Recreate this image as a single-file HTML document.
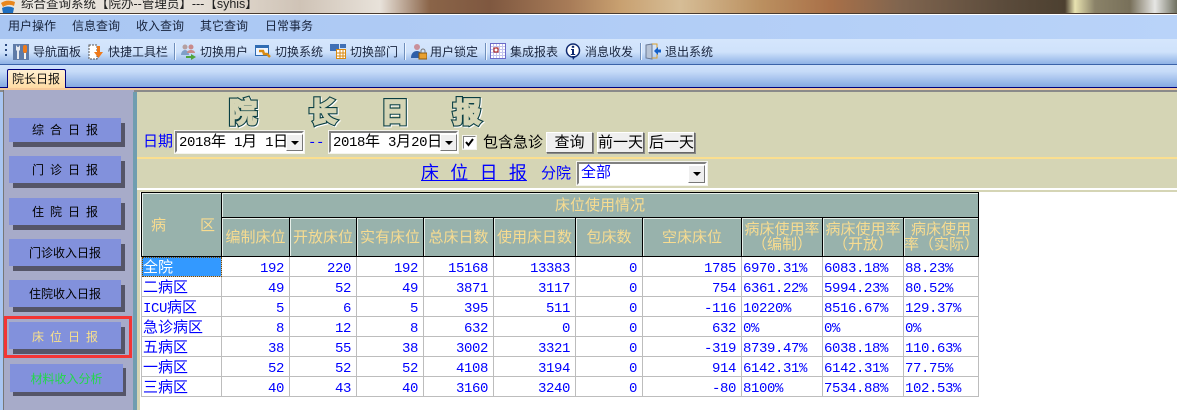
<!DOCTYPE html>
<html lang="zh"><head><meta charset="utf-8"><title>院长日报</title>
<style>
*{box-sizing:border-box;margin:0;padding:0}
html,body{width:1177px;height:410px;overflow:hidden;background:#fff}
body{position:relative;font-family:"Liberation Sans","WenQuanYi Zen Hei","Noto Sans CJK SC",sans-serif;font-size:15px;color:#000}
.a{position:absolute;white-space:pre}
.sm{font-family:"Liberation Sans","Noto Sans CJK SC",sans-serif;font-size:12px;line-height:16px;color:#17233c}
i{font-style:normal;font-family:"Liberation Mono",monospace;font-size:14px;letter-spacing:-.4px;line-height:14px}
.sep{position:absolute;top:43px;width:1px;height:17px;background:#6f8fbc;box-shadow:1px 0 0 #eef5ff}
svg{position:absolute}
.btn{position:absolute;background:#8291dc;box-shadow:4px 5px 0 #555568;text-align:center;line-height:28px;font-size:12px;word-spacing:2.700px;color:#000}
.inset{position:absolute;background:#fff;border:2px solid;border-color:#808080 #fff #fff #808080;outline:1px solid #f4f4ee}
.dd{position:absolute;background:#efefef;border:1px solid;border-color:#fff #777 #777 #fff}
.dd:after{content:"";position:absolute;left:4px;top:6px;border:4px solid transparent;border-top:4px solid #000;border-bottom:0}
.pb{position:absolute;top:132px;height:21px;background:#efefef;border:1px solid;border-color:#fff #666 #666 #fff;box-shadow:1px 1px 0 #888;text-align:center;line-height:19px}
table{position:absolute;left:141px;top:192px;width:837px;border-collapse:collapse;table-layout:fixed}
th{background:#98b2ac;color:#f8dc90;font-weight:400;border:1px solid #000;box-shadow:inset 1px 1px 0 #e6efe9;line-height:15px;padding:0;overflow:hidden}
td{border:1px solid #bdbdbd;height:20px;color:#00f;padding:2px 5px 0 1px;text-align:right;line-height:16px;overflow:hidden;white-space:nowrap;background:#fff}
td.l{text-align:left}
td.s{background:#3399ff;color:#fff;outline:1px dotted #7a4a00;outline-offset:-1px}
.h{font-family:"Noto Sans CJK SC",sans-serif;font-weight:700;font-size:28px;line-height:36px;top:93px}
.h1{color:#fff;-webkit-text-stroke:4px #fff;margin:1px 0 0 1px}
.h2{color:#0a3f44;-webkit-text-stroke:4px #0a3f44}
.h3{color:#d5d5b5;-webkit-text-stroke:1.800px #d5d5b5}
</style></head><body>

<!-- title bar -->
<div class="a" style="left:0;top:0;width:1177px;height:14px;background:linear-gradient(90deg,#e9e6e0 0,#e6dfd6 200px,#cfc3b6 300px,#e8e2da 380px,#8a6448 430px,#7f5840 490px,#a87c58 570px,#c8a070 620px,#d6bd96 680px,#bb9060 760px,#a97048 830px,#80654f 900px,#5c4c3c 1000px,#4c4030 1065px,#e8e2b0 1075px,#8a8268 1095px,#78705a 1130px,#e6e6e4 1155px,#6f7060 1177px);border-bottom:1px solid #4a3c30"></div>
<svg style="left:0;top:0" width="16" height="13"><path d="M1 3C5 0 10 0 15 2L14 6C10 4 6 5 3 7Z" fill="#e8871e"/><path d="M2 8C6 6 10 6 14 8L13 13H3Z" fill="#1f6fc0"/></svg>
<div class="a" style="left:21px;top:-4px;font:12.5px/16px 'Liberation Sans','Noto Sans CJK SC',sans-serif;color:#222">综合查询系统【院办--管理员】---【syhis】</div>

<!-- menu -->
<div class="a" style="left:0;top:15px;width:1177px;height:24px;background:linear-gradient(90deg,#a9c6f2,#b9d3f9)"></div>
<div class="a sm" style="left:8px;top:18px">用户操作</div>
<div class="a sm" style="left:72px;top:18px">信息查询</div>
<div class="a sm" style="left:136px;top:18px">收入查询</div>
<div class="a sm" style="left:200px;top:18px">其它查询</div>
<div class="a sm" style="left:265px;top:18px">日常事务</div>

<!-- toolbar -->
<div class="a" style="left:0;top:39px;width:1177px;height:26px;background:linear-gradient(#d5e6fc 0,#cfe2fb 50%,#8fb2e6 96%,#3a62a8 96%)"></div>
<div class="a" style="left:0;top:65px;width:1177px;height:23px;background:linear-gradient(#cfe2fb,#c6dbf8 30%,#86a9e2);border-bottom:1px solid #00007f"></div>
<div class="a" style="left:5px;top:44px;width:2px;height:15px;background:repeating-linear-gradient(#2a4a80 0 2px,transparent 2px 5px)"></div>

<svg style="left:13px;top:44px" width="17" height="16"><rect x="0" y="0" width="16" height="16" fill="#5f7ba8"/><path d="M3 1v5l1 1v8h2V7l1-1V1L5.500 3 4.500 3Z" fill="#e6e9f0"/><rect x="10" y="1" width="4" height="8" rx="2" fill="#ef7a1a"/><rect x="11" y="9" width="2" height="6" fill="#f2f2f2"/></svg>
<div class="a sm" style="left:33px;top:44px">导航面板</div>
<svg style="left:88px;top:44px" width="17" height="16"><rect x="1" y="1" width="8" height="14" fill="#fff" stroke="#555" stroke-dasharray="2 1"/><path d="M9 2h3v6h3l-4.500 6L6 8h3Z" fill="#ef7a1a"/></svg>
<div class="a sm" style="left:108px;top:44px">快捷工具栏</div>
<div class="sep" style="left:174px"></div>
<svg style="left:180px;top:43px" width="17" height="17"><circle cx="5" cy="4" r="2.500" fill="#b5a0a0"/><circle cx="11" cy="4" r="2.500" fill="#c98a8a"/><path d="M1 12c0-3 2-5 4-5s4 2 4 5Z" fill="#7f9fc8"/><path d="M7 10c0-2 2-3 4-3s4 1 4 3Z" fill="#c98a8a"/><path d="M6 13h5v-2l5 3-5 3v-2H6Z" fill="#4fa53a"/></svg>
<div class="a sm" style="left:200px;top:44px">切换用户</div>
<svg style="left:255px;top:44px" width="17" height="16"><rect x="0.500" y="1.500" width="13" height="10" fill="#eef5ff" stroke="#2f6cb3"/><rect x="1" y="2" width="12" height="2" fill="#2f6cb3"/><path d="M4 7l4 0 1 3 3 0 3 3" fill="none" stroke="#d98a10" stroke-width="2.500"/></svg>
<div class="a sm" style="left:275px;top:44px">切换系统</div>
<svg style="left:330px;top:43px" width="17" height="16"><rect x="0" y="1" width="9" height="7" fill="#3f6fb5"/><rect x="10" y="1" width="6" height="4" fill="#3f6fb5"/><rect x="6.500" y="6.500" width="9" height="9" fill="#fff" stroke="#d98a10"/><path d="M7 10h8M7 13h8M10 7v8M13 7v8" stroke="#d98a10"/></svg>
<div class="a sm" style="left:350px;top:44px">切换部门</div>
<div class="sep" style="left:404px"></div>
<svg style="left:411px;top:43px" width="16" height="17"><circle cx="6" cy="4" r="3" fill="#c9909a"/><path d="M0 15c0-5 3-7 6-7s5 2 5 7Z" fill="#2f5fa8"/><rect x="8" y="10" width="8" height="6" fill="#e8a030" stroke="#8a5a10"/><path d="M10 10V8a2 2 0 014 0v2" fill="none" stroke="#777"/></svg>
<div class="a sm" style="left:430px;top:44px">用户锁定</div>
<div class="sep" style="left:485px"></div>
<svg style="left:490px;top:43px" width="17" height="16"><rect x="0.500" y="0.500" width="15" height="15" fill="#fff" stroke="#6a6ac8"/><path d="M1 3.500h14M1 6.500h14M1 9.500h14M1 12.500h14M3.500 1v14M6.500 1v14M9.500 1v14M12.500 1v14" stroke="#c4c4ee"/><rect x="4" y="5" width="4" height="4" fill="#fff" stroke="#a00000"/></svg>
<div class="a sm" style="left:510px;top:44px">集成报表</div>
<svg style="left:565px;top:43px" width="16" height="18"><circle cx="8" cy="7.500" r="6.500" fill="#fff" stroke="#102a70" stroke-width="1.500"/><path d="M7 13l1 4 3-4Z" fill="#102a70"/><rect x="6.800" y="2.800" width="2.400" height="2" fill="#102a70"/><path d="M6 6h3v5h1.200v1H5.800v-1H7V7H6Z" fill="#102a70"/></svg>
<div class="a sm" style="left:585px;top:44px">消息收发</div>
<div class="sep" style="left:640px"></div>
<svg style="left:645px;top:43px" width="17" height="17"><path d="M1 2l6-1v15l-6-1Z" fill="#b8c4d6" stroke="#6a7a95"/><path d="M7 1h5v4M7 15h5v-4" fill="none" stroke="#d8a030"/><path d="M9 8l4-4v2.500h3v3h-3V12Z" fill="#1460c8"/></svg>
<div class="a sm" style="left:665px;top:44px">退出系统</div>

<!-- tab -->
<div class="a" style="left:7px;top:69px;width:59px;height:19px;background:linear-gradient(#fff0d2,#ffdca4);border:1px solid #00007f;border-bottom:0;border-radius:2px 2px 0 0;font:12px/18px 'Liberation Sans','Noto Sans CJK SC',sans-serif;padding-left:4px;color:#111">院长日报</div>
<div class="a" style="left:0;top:88px;width:1177px;height:2px;background:#f6c99a"></div>
<div class="a" style="left:0;top:90px;width:1177px;height:2px;background:#8a8a8a"></div>

<!-- side -->
<div class="a" style="left:0;top:92px;width:3px;height:318px;background:#a9c6f2"></div>
<div class="a" style="left:3px;top:90px;width:131px;height:320px;background:#a7abc9;border-left:1px solid #777"></div>
<div class="a" style="left:133px;top:92px;width:4px;height:318px;background:#6f9db0"></div>

<div class="btn" style="left:9px;top:118px;width:112px;height:24px;line-height:24px">综 合 日 报</div>
<div class="btn" style="left:9px;top:156px;width:112px;height:27px">门 诊 日 报</div>
<div class="btn" style="left:9px;top:198px;width:112px;height:27px">住 院 日 报</div>
<div class="btn" style="left:9px;top:239px;width:112px;height:27px">门诊收入日报</div>
<div class="btn" style="left:9px;top:280px;width:112px;height:27px">住院收入日报</div>
<div class="btn" style="left:9px;top:322px;width:112px;height:27px;line-height:30px;color:#f8e08c">床 位 日 报</div>
<div class="btn" style="left:10px;top:364px;width:113px;height:28px;line-height:30px;color:#22d84a;box-shadow:3px 4px 0 #555568">材料收入分析</div>
<div class="a" style="left:4px;top:316px;width:128px;height:42px;border:3px solid #f33535"></div>

<!-- content -->
<div class="a" style="left:137px;top:92px;width:1040px;height:100px;background:#d5d5b5"></div>
<div class="a" style="left:137px;top:192px;width:3px;height:218px;background:#d5d5b5"></div>
<div class="a" style="left:137px;top:157px;width:1040px;height:2px;background:#fbdf8f"></div>
<div class="a" style="left:137px;top:188px;width:1040px;height:2px;background:#fff"></div>

<div class="a h h1" style="left:229px">院</div><div class="a h h2" style="left:229px">院</div><div class="a h h3" style="left:229px">院</div>
<div class="a h h1" style="left:309px">长</div><div class="a h h2" style="left:309px">长</div><div class="a h h3" style="left:309px">长</div>
<div class="a h h1" style="left:381px">日</div><div class="a h h2" style="left:381px">日</div><div class="a h h3" style="left:381px">日</div>
<div class="a h h1" style="left:453px">报</div><div class="a h h2" style="left:453px">报</div><div class="a h h3" style="left:453px">报</div>

<div class="a" style="left:143px;top:132px;color:#00f;line-height:20px">日期</div>
<div class="inset" style="left:175px;top:131px;width:129px;height:22px"></div>
<div class="a" style="left:179px;top:133px;line-height:18px"><i>2018</i>年<i> 1</i>月<i> 1</i>日</div>
<div class="dd" style="left:286px;top:134px;width:17px;height:17px"></div>
<div class="a" style="left:308px;top:133px;color:#00f;line-height:18px"><i>--</i></div>
<div class="inset" style="left:329px;top:131px;width:129px;height:22px"></div>
<div class="a" style="left:333px;top:133px;line-height:18px"><i>2018</i>年<i> 3</i>月<i>20</i>日</div>
<div class="dd" style="left:440px;top:134px;width:17px;height:17px"></div>
<div class="inset" style="left:463px;top:136px;width:13px;height:13px;border-width:1px"></div>
<svg style="left:464px;top:137px" width="11" height="11"><path d="M2 5l2.500 3L9 2" fill="none" stroke="#000" stroke-width="2"/></svg>
<div class="a" style="left:483px;top:133px;line-height:20px">包含急诊</div>
<div class="pb" style="left:546px;width:47px">查询</div>
<div class="pb" style="left:597px;width:47px">前一天</div>
<div class="pb" style="left:648px;width:47px">后一天</div>

<div class="a" style="left:421px;top:162px;color:#00f;font-size:18px;line-height:22px;text-decoration:underline;word-spacing:6.300px">床 位 日 报</div>
<div class="a" style="left:541px;top:164px;color:#00f;line-height:20px">分院</div>
<div class="inset" style="left:577px;top:162px;width:130px;height:23px"></div>
<div class="a" style="left:581px;top:164px;color:#00f;line-height:18px">全部</div>
<div class="dd" style="left:688px;top:165px;width:17px;height:18px"></div>

<table>
<colgroup><col style="width:80px"><col style="width:68px"><col style="width:67px"><col style="width:67px"><col style="width:70px"><col style="width:82px"><col style="width:67px"><col style="width:99px"><col style="width:81px"><col style="width:81px"><col style="width:75px"></colgroup>
<tr style="height:25px"><th rowspan="2" style="text-align:left;padding:1px 0 0 9px;white-space:pre">病<span style="padding-left:34px">区</span></th><th colspan="10">床位使用情况</th></tr>
<tr style="height:39px"><th>编制床位</th><th>开放床位</th><th>实有床位</th><th>总床日数</th><th>使用床日数</th><th>包床数</th><th>空床床位</th><th>病床使用率<br>（编制）</th><th>病床使用率<br>（开放）</th><th>病床使用<br>率（实际）</th></tr>
<tr><td class="l s">全院</td><td><i>192</i></td><td><i>220</i></td><td><i>192</i></td><td><i>15168</i></td><td><i>13383</i></td><td><i>0</i></td><td><i>1785</i></td><td class="l"><i>6970.31%</i></td><td class="l"><i>6083.18%</i></td><td class="l"><i>88.23%</i></td></tr>
<tr><td class="l">二病区</td><td><i>49</i></td><td><i>52</i></td><td><i>49</i></td><td><i>3871</i></td><td><i>3117</i></td><td><i>0</i></td><td><i>754</i></td><td class="l"><i>6361.22%</i></td><td class="l"><i>5994.23%</i></td><td class="l"><i>80.52%</i></td></tr>
<tr><td class="l"><i>ICU</i>病区</td><td><i>5</i></td><td><i>6</i></td><td><i>5</i></td><td><i>395</i></td><td><i>511</i></td><td><i>0</i></td><td><i>-116</i></td><td class="l"><i>10220%</i></td><td class="l"><i>8516.67%</i></td><td class="l"><i>129.37%</i></td></tr>
<tr><td class="l">急诊病区</td><td><i>8</i></td><td><i>12</i></td><td><i>8</i></td><td><i>632</i></td><td><i>0</i></td><td><i>0</i></td><td><i>632</i></td><td class="l"><i>0%</i></td><td class="l"><i>0%</i></td><td class="l"><i>0%</i></td></tr>
<tr><td class="l">五病区</td><td><i>38</i></td><td><i>55</i></td><td><i>38</i></td><td><i>3002</i></td><td><i>3321</i></td><td><i>0</i></td><td><i>-319</i></td><td class="l"><i>8739.47%</i></td><td class="l"><i>6038.18%</i></td><td class="l"><i>110.63%</i></td></tr>
<tr><td class="l">一病区</td><td><i>52</i></td><td><i>52</i></td><td><i>52</i></td><td><i>4108</i></td><td><i>3194</i></td><td><i>0</i></td><td><i>914</i></td><td class="l"><i>6142.31%</i></td><td class="l"><i>6142.31%</i></td><td class="l"><i>77.75%</i></td></tr>
<tr><td class="l">三病区</td><td><i>40</i></td><td><i>43</i></td><td><i>40</i></td><td><i>3160</i></td><td><i>3240</i></td><td><i>0</i></td><td><i>-80</i></td><td class="l"><i>8100%</i></td><td class="l"><i>7534.88%</i></td><td class="l"><i>102.53%</i></td></tr>
</table>
</body></html>
